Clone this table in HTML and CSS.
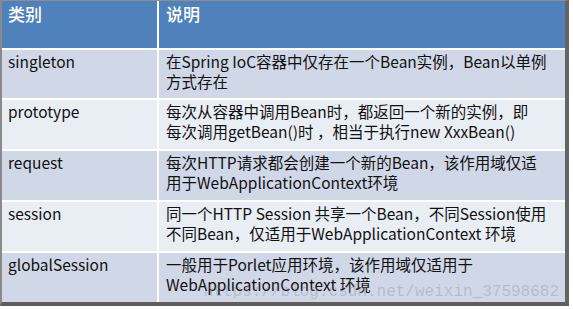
FILE: index.html
```html
<!DOCTYPE html>
<html lang="zh">
<head>
<meta charset="utf-8">
<link rel="stylesheet" href="styles.css">
</head>
<body>
<div class="frame">
  <div class="grid">
    <div class="cell head">类别</div>
    <div class="cell head">说明</div>

    <div class="cell dark">singleton</div>
    <div class="cell dark">在Spring IoC容器中仅存在一个Bean实例，Bean以单例<br>方式存在</div>

    <div class="cell light">prototype</div>
    <div class="cell light">每次从容器中调用Bean时，都返回一个新的实例，即<br>每次调用getBean()时 ，相当于执行new XxxBean()</div>

    <div class="cell dark">request</div>
    <div class="cell dark">每次HTTP请求都会创建一个新的Bean，该作用域仅适<br>用于WebApplicationContext环境</div>

    <div class="cell light">session</div>
    <div class="cell light">同一个HTTP Session 共享一个Bean，不同Session使用<br>不同Bean，仅适用于WebApplicationContext 环境</div>

    <div class="cell dark">globalSession</div>
    <div class="cell dark">一般用于Porlet应用环境，该作用域仅适用于<br>WebApplicationContext 环境</div>
  </div>
  <div class="watermark">https://blog.csdn.net/weixin_37598682</div>
</div>
</body>
</html>
```

FILE: styles.css
```css
html, body {
  margin: 0;
  padding: 0;
  background: #ffffff;
}

body {
  font-family: "Noto Sans CJK SC", "Noto Sans", sans-serif;
  color: #111;
}

.frame {
  position: relative;
  width: 563px;
  border-left: 2px solid #8a8a8a;
  border-top: 1px solid #8e8e8e;
  border-right: 4px solid #646464;
  border-bottom: 4px solid #5e5e5e;
}

.grid {
  display: grid;
  grid-template-columns: 155px 406px;
  grid-template-rows: 47px 48px 49px 49px 49px 49px;
  gap: 2px;
  background: #ffffff;
}

.cell {
  font-size: 15.5px;
  line-height: 20px;
  padding: 1px 4px 0 6px;
  white-space: nowrap;
}

.cell:nth-child(even) {
  padding-left: 7px;
}

.head {
  background: #4f81bd;
  color: #ffffff;
  font-size: 17px;
  font-weight: 500;
  padding-top: 3px;
}

.dark {
  background: #d0d8e8;
}

.light {
  background: #e9edf4;
}

.watermark {
  position: absolute;
  right: 6px;
  bottom: 1px;
  font-family: "Liberation Mono", monospace;
  font-size: 16px;
  line-height: 18px;
  color: rgba(110, 110, 120, 0.28);
  white-space: nowrap;
  pointer-events: none;
}
```
